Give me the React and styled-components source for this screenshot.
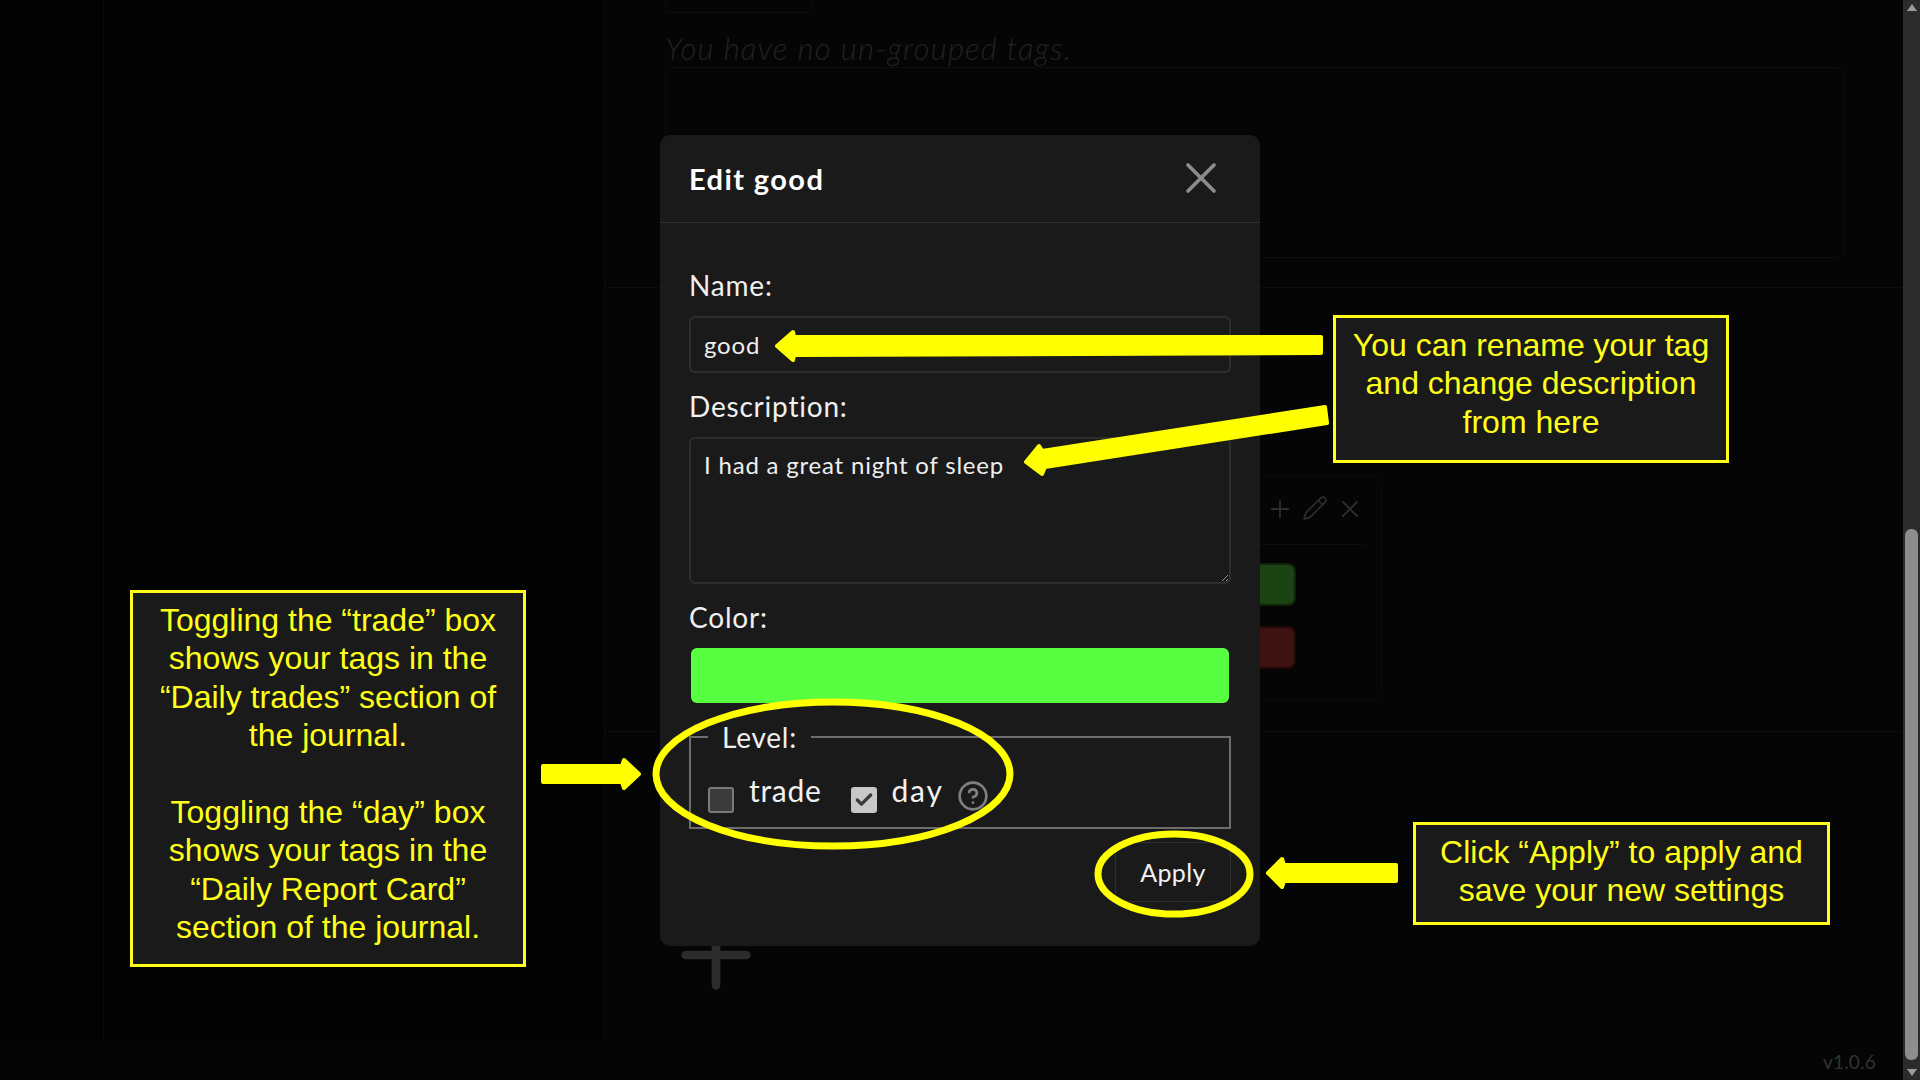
import React from 'react';
import styled, { createGlobalStyle } from 'styled-components';
import { Plus, Pencil, X, CircleHelp, Check } from 'lucide-react';

const Global = createGlobalStyle`
  html, body { margin: 0; height: 100%; background: #050505; overflow: hidden; }
  * { box-sizing: border-box; }
  #root { height: 100%; }
`;

const UI_FONT = `Lato, "Noto Sans", sans-serif`;

const Page = styled.div`
  position: relative; width: 1920px; height: 1080px; display: flex;
  background: #050505; font-family: ${UI_FONT}; overflow: hidden;
`;
const Workspace = styled.div`flex: 1; display: flex; flex-direction: column; min-width: 0;`;
const Columns = styled.div`flex: 0 0 1041px; display: flex; min-height: 0;`;
const Rail = styled.div`flex: 0 0 104px; background: #020202; border-right: 1px solid #0b0b0b;`;
const SideNav = styled.div`flex: 0 0 501px; background: #030303; border-right: 1px solid #0b0b0b;`;
const Main = styled.main`flex: 1; display: flex; flex-direction: column; min-width: 0;`;
const Section = styled.section`
  flex: 0 0 ${p => p.$h}px; padding-left: 60px; padding-right: 58px;
  border-bottom: ${p => (p.$line ? '1px solid #0e0e0e' : 'none')};
  position: relative;
`;
const Stub = styled.div`
  width: 148px; height: 13px; border: 1px solid #0e0e0e; border-top: 0; border-radius: 0 0 4px 4px;
`;
const Empty = styled.p`
  margin: 17px 0 0; font-size: 31px; line-height: 36px; font-style: italic; font-weight: 300; letter-spacing: 1.2px;
  color: #222; white-space: nowrap;
`;
const EmptyRight = styled(Empty)`margin: 0; padding-top: 79px;`;
const BigBox = styled.div`height: 191px; margin-top: 1px; border: 1px solid #0e0e0e; border-radius: 8px;`;
const GroupCard = styled.div`
  width: 717px; height: 226px; margin-top: 187px; padding: 19px 17px 0 0;
  border: 1px solid #0b0b0b; border-radius: 8px;
`;
const CardTools = styled.div`
  display: flex; justify-content: flex-end; gap: 8px; color: #2d2d2d; padding-bottom: 21px;
  border-bottom: 1px solid #0e0e0e;
`;
const Swatches = styled.div`display: flex; flex-direction: column; gap: 24px; align-items: flex-end; padding: 20px 70px 0 0;`;
const Swatch = styled.div`width: 60px; height: 39px; border-radius: 6px; background: ${p => p.$c}; box-shadow: 0 0 0 2px ${p => p.$r};`;
const AddTag = styled.div`color: #2c2c2c; display: flex; margin: 56px 0 0 -1px; width: 104px;`;

const BottomBar = styled.footer`flex: 1; display: flex; justify-content: flex-end; align-items: center; padding: 2px 27px 0 0;`;
const Version = styled.span`font-size: 19px; letter-spacing: 0.2px; color: #333; font-family: ${UI_FONT};`;

const Scrollbar = styled.aside`
  flex: 0 0 17px; background: #2b2b2b; display: flex; flex-direction: column; align-items: center; justify-content: space-between; padding: 4px 0;
`;
const ScrollTrack = styled.div`flex: 1; width: 100%; padding: 518px 2px 9px;`;
const Thumb = styled.div`height: 100%; border-radius: 6px; background: #8d8d8d;`;
const Tri = styled.div`
  width: 0; height: 0; border-left: 5px solid transparent; border-right: 5px solid transparent;
  ${p => (p.$up ? 'border-bottom: 7px solid #9b9b9b;' : 'border-top: 7px solid #9b9b9b;')}
`;

const Overlay = styled.div`
  position: absolute; inset: 0; display: flex; align-items: center; justify-content: center;
`;
const Modal = styled.div`
  width: 600px; height: 811px; background: #1a1a1a; border-radius: 10px; color: #f2f2f2;
  display: flex; flex-direction: column;
`;
const ModalHead = styled.header`
  height: 88px; flex: none; display: flex; align-items: center; justify-content: space-between;
  padding: 0 33px 0 29px; border-bottom: 1px solid #303030;
`;
const ModalTitle = styled.h2`margin: 0; font-size: 29px; font-weight: 700; letter-spacing: 1.4px; color: #fff;`;
const CloseBtn = styled.div`display: flex; color: #8c8c8c;`;
const ModalBody = styled.div`padding: 44px 29px 0; display: flex; flex-direction: column;`;
const Label = styled.label`
  display: block; font-size: 28px; line-height: 36px; font-weight: 400; letter-spacing: 0.8px; color: #f0f0f0;
  margin-bottom: ${p => p.$mb || 13}px;
`;
const TextInput = styled.input`
  display: block; width: 100%; height: 57px; margin-bottom: 15px; padding: 0 13px; background: #1a1a1a;
  border: 2px solid #2e2e2e; border-radius: 6px; color: #eee; font: 400 24px ${UI_FONT}; letter-spacing: 0.8px; outline: none;
`;
const TextArea = styled.textarea`
  display: block; width: 100%; height: 147px; margin-bottom: 15px; padding: 11px 13px; background: #1a1a1a;
  border: 2px solid #2e2e2e; border-radius: 6px; color: #eee; font: 400 24px/30px ${UI_FONT}; letter-spacing: 0.8px; outline: none;
`;
const ColorBar = styled.div`height: 55px; margin: 0 2px 20px; border-radius: 6px; background: #58ff41;`;
const LevelBox = styled.fieldset`
  margin: 0; height: 106px; padding: 0 0 0 17px; border: 2px solid #6d6d6d; border-radius: 0; display: flex;
`;
const Legend = styled.legend`font-size: 28px; line-height: 28px; letter-spacing: 0.8px; padding: 0 14px; color: #f0f0f0;`;
const LevelRow = styled.div`display: flex; align-items: center; padding-top: 24px;`;
const Box = styled.span`
  width: 26px; height: 26px; border-radius: 3px; display: inline-flex; align-items: center; justify-content: center;
  border: 2px solid ${p => (p.$on ? '#c8c8c8' : '#7a7a7a')}; background: ${p => (p.$on ? '#c8c8c8' : '#3b3b3b')};
  color: #3a3a3a; margin-top: 12px;
`;
const BoxLabel = styled.span`
  font-size: 30px; line-height: 36px; letter-spacing: ${p => p.$ls || 0.7}px; margin: -8px ${p => p.$mr}px 0 15px; color: #f2f2f2;
`;
const Help = styled.span`display: flex; color: #808080; margin-top: 5px;`;
const Footer = styled.div`display: flex; justify-content: flex-end; margin-top: 13px;`;
const ApplyBtn = styled.button`
  width: 116px; height: 60px; background: transparent; border: 1px solid #2f2f2f; border-radius: 4px;
  color: #f2f2f2; font: 400 25px ${UI_FONT}; letter-spacing: 0.4px; padding: 0;
`;

const Callout = styled.div`
  position: absolute; left: ${p => p.$x}px; top: ${p => p.$y}px; width: ${p => p.$w}px; height: ${p => p.$h}px;
  border: 3px solid #ffff19; background: #1a1a1a; color: #ffff19; text-align: center;
  font: 400 32px/38.4px "Liberation Sans", Arial, sans-serif; padding-top: ${p => p.$pt}px; white-space: pre-line;
`;
const Marks = styled.svg`position: absolute; inset: 0; width: 1920px; height: 1080px; pointer-events: none;`;

const Arrow = ({ d }) => <path d={d} fill="#ffff00" stroke="#ffff00" strokeWidth="4" strokeLinejoin="round" />;

export default function App() {
  return (
    <Page>
      <Global />
      <Workspace>
        <Columns>
          <Rail />
          <SideNav />
          <Main>
            <Section $h={288} $line>
              <Stub />
              <Empty>You have no un-grouped tags.</Empty>
              <BigBox />
            </Section>
            <Section $h={444} $line>
              <GroupCard>
                <CardTools>
                  <Plus size={28} strokeWidth={1.6} />
                  <Pencil size={26} strokeWidth={1.6} />
                  <X size={28} strokeWidth={1.6} />
                </CardTools>
                <Swatches>
                  <Swatch $c="#1c4313" $r="#0e2409" />
                  <Swatch $c="#3f1212" $r="#200808" />
                </Swatches>
              </GroupCard>
            </Section>
            <Section $h={309}>
              <EmptyRight>You have no tag groups in this tag set yet.</EmptyRight>
              <AddTag><Plus size={104} strokeWidth={2} /></AddTag>
            </Section>
          </Main>
        </Columns>
        <BottomBar><Version>v1.0.6</Version></BottomBar>
      </Workspace>
      <Scrollbar>
        <Tri $up />
        <ScrollTrack><Thumb /></ScrollTrack>
        <Tri />
      </Scrollbar>

      <Overlay>
        <Modal>
          <ModalHead>
            <ModalTitle>Edit good</ModalTitle>
            <CloseBtn><X size={52} strokeWidth={1.7} /></CloseBtn>
          </ModalHead>
          <ModalBody>
            <Label>Name:</Label>
            <TextInput readOnly value="good" />
            <Label>Description:</Label>
            <TextArea readOnly value="I had a great night of sleep" />
            <Label>Color:</Label>
            <ColorBar />
            <LevelBox>
              <Legend>Level:</Legend>
              <LevelRow>
                <Box />
                <BoxLabel $mr={29}>trade</BoxLabel>
                <Box $on><Check size={20} strokeWidth={4} /></Box>
                <BoxLabel $mr={13} $ls={1.8}>day</BoxLabel>
                <Help><CircleHelp size={32} strokeWidth={2} /></Help>
              </LevelRow>
            </LevelBox>
            <Footer><ApplyBtn>Apply</ApplyBtn></Footer>
          </ModalBody>
        </Modal>
      </Overlay>

      <Marks viewBox="0 0 1920 1080">
        <Arrow d="M1321 337 L1321 353 L794 355 L793 360 L777 346 L793 332 L794 337 Z" />
        <Arrow d="M1325 407 L1327 423 L1045 467 L1042 474 L1026 462 L1039 446 L1042 451 Z" />
        <Arrow d="M543 766 L543 782 L622 782 L624 788 L639 774 L624 760 L622 766 Z" />
        <Arrow d="M1396 865 L1396 881 L1284 881 L1282 887 L1268 873 L1282 859 L1284 865 Z" />
        <ellipse cx="833" cy="774" rx="177" ry="72" fill="none" stroke="#ffff00" strokeWidth="7" />
        <ellipse cx="1174" cy="874" rx="76" ry="40" fill="none" stroke="#ffff00" strokeWidth="7" />
      </Marks>

      <Callout $x={1333} $y={315} $w={396} $h={148} $pt={8}>{'You can rename your tag\nand change description\nfrom here'}</Callout>
      <Callout $x={130} $y={590} $w={396} $h={377} $pt={8}>{'Toggling the “trade” box\nshows your tags in the\n“Daily trades” section of\nthe journal.\n\nToggling the “day” box\nshows your tags in the\n“Daily Report Card”\nsection of the journal.'}</Callout>
      <Callout $x={1413} $y={822} $w={417} $h={103} $pt={8}>{'Click “Apply” to apply and\nsave your new settings'}</Callout>
    </Page>
  );
}
